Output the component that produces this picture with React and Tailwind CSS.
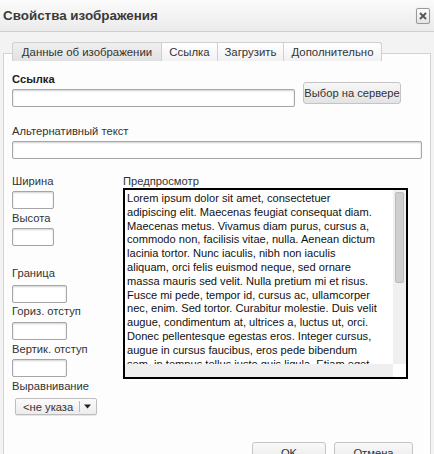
const previewLines = [
  "Lorem ipsum dolor sit amet, consectetuer",
  "adipiscing elit. Maecenas feugiat consequat diam.",
  "Maecenas metus. Vivamus diam purus, cursus a,",
  "commodo non, facilisis vitae, nulla. Aenean dictum",
  "lacinia tortor. Nunc iaculis, nibh non iaculis",
  "aliquam, orci felis euismod neque, sed ornare",
  "massa mauris sed velit. Nulla pretium mi et risus.",
  "Fusce mi pede, tempor id, cursus ac, ullamcorper",
  "nec, enim. Sed tortor. Curabitur molestie. Duis velit",
  "augue, condimentum at, ultrices a, luctus ut, orci.",
  "Donec pellentesque egestas eros. Integer cursus,",
  "augue in cursus faucibus, eros pede bibendum",
  "sem, in tempus tellus justo quis ligula. Etiam eget",
  "tortor. Vestibulum rutrum, est ut placerat",
];

function Input({ className }) {
  return (
    <div
      className={
        "h-[18px] bg-white border border-[#a6a6a6] rounded-[2px] shadow-[inset_0_1px_2px_rgba(0,0,0,0.18)] " +
        className
      }
    />
  );
}

function Tab({ label, active, className }) {
  return (
    <div
      className={
        "h-[19px] flex items-center justify-center border-t border-l border-[#d0d0d0] text-[11.4px] text-[#333] whitespace-nowrap " +
        (active
          ? "bg-gradient-to-b from-[#f0f0f0] to-[#e1e1e1] "
          : "bg-gradient-to-b from-[#ffffff] to-[#f1f1f1] ") +
        className
      }
    >
      {label}
    </div>
  );
}

export default function App() {
  return (
    <div className="w-[434px] h-[454px] overflow-hidden bg-[#f3f3f3] font-['Liberation_Sans',Arial,sans-serif] text-[11.2px] leading-[14px] text-[#333]">
      {/* Title bar */}
      <div className="h-[32px] border-b border-[#d0d0d0] bg-gradient-to-b from-[#fbfbfb] to-[#ebebeb] flex items-center justify-between pl-[3px] pr-[4px]">
        <span className="text-[13.4px] leading-[16px] font-bold text-[#3a3a3a]">
          Свойства изображения
        </span>
        <div className="w-[14px] h-[16px] border border-[#999] rounded-[2px] bg-gradient-to-b from-[#fdfdfd] to-[#e4e4e4] shadow-[0_0_1px_rgba(0,0,0,0.2)] flex items-center justify-center">
          <svg width="8" height="8" viewBox="0 0 8 8">
            <path d="M1 1 L7 7 M7 1 L1 7" stroke="#555" strokeWidth="1.8" />
          </svg>
        </div>
      </div>

      {/* Body */}
      <div className="px-[3px] pt-[10px]">
        {/* Tabs */}
        <div className="ml-[9px] flex relative z-10 -mb-[8px]">
          <Tab label="Данные об изображении" active className="w-[149px] rounded-tl-[3px]" />
          <Tab label="Ссылка" className="w-[56px]" />
          <Tab label="Загрузить" className="w-[66px]" />
          <Tab label="Дополнительно" className="w-[99px] border-r rounded-tr-[3px]" />
        </div>

        {/* Panel */}
        <div className="h-[401px] border border-b-0 border-[#d3d3d3] bg-[#fdfdfd] pl-[8px] pt-[18px]">
          <div className="flex items-start">
            <div className="w-[283px]">
              <div className="font-bold text-[#222]">Ссылка</div>
              <Input className="mt-[3px] w-[283px]" />
            </div>
            <div className="ml-[8px] mt-[10px] w-[98px] h-[22px] border border-[#c4c4c4] rounded-[3px] bg-gradient-to-b from-[#f7f7f7] to-[#e3e3e3] flex items-center justify-center text-[#333] whitespace-nowrap">
              Выбор на сервере
            </div>
          </div>

          <div className="mt-[17px]">Альтернативный текст</div>
          <Input className="mt-[3px] w-[410px]" />

          <div className="flex mt-[15px]">
            {/* Left column */}
            <div className="w-[111px] flex flex-col items-start">
              <div>Ширина</div>
              <Input className="mt-[3px] w-[42px]" />
              <div className="mt-[2px]">Высота</div>
              <Input className="mt-[3px] w-[42px]" />
              <div className="mt-[20px]">Граница</div>
              <Input className="mt-[5px] w-[55px]" />
              <div className="mt-[1px]">Гориз. отступ</div>
              <Input className="mt-[4px] w-[55px]" />
              <div className="mt-[2px]">Вертик. отступ</div>
              <Input className="mt-[3px] w-[55px]" />
              <div className="mt-[2px]">Выравнивание</div>
              <div className="mt-[5px] ml-[3px] w-[82px] h-[17px] border border-[#bdbdbd] rounded-[2px] bg-gradient-to-b from-[#fbfbfb] to-[#ececec] shadow-[0_1px_1px_rgba(0,0,0,0.1)] flex items-center">
                <span className="pl-[7px] w-[64px] text-[#333] whitespace-nowrap overflow-hidden">
                  &lt;не указа
                </span>
                <div className="w-px h-[11px] bg-[#b8b8b8]" />
                <svg width="16" height="15" viewBox="0 0 16 15" className="shrink-0">
                  <path d="M4 5.5 L11 5.5 L7.5 9.5 Z" fill="#222" />
                </svg>
              </div>
            </div>

            {/* Preview */}
            <div className="flex flex-col">
              <div>Предпросмотр</div>
              <div className="w-[285px] h-[191px] border-2 border-black bg-white flex flex-col">
                <div className="flex h-[174px]">
                  <div className="flex-1 overflow-hidden pl-[2px] pt-[2px] text-[11.1px] text-[#111] leading-[13.8px] whitespace-nowrap">
                    {previewLines.map((l, i) => (
                      <div key={i}>{l}</div>
                    ))}
                  </div>
                  <div className="w-[13px] bg-[#f0f0f0] pt-[2px] flex justify-center">
                    <div className="w-[9px] h-[91px] bg-[#cfcfcf] border border-[#bcbcbc] rounded-[2px]" />
                  </div>
                </div>
                <div className="flex h-[13px]">
                  <div className="flex-1 bg-[#efefef]" />
                  <div className="w-[13px] bg-white" />
                </div>
              </div>
            </div>
          </div>

          {/* Footer buttons */}
          <div className="flex justify-end pr-[17px] mt-[27px] gap-[8px]">
            <div className="w-[74px] h-[24px] border border-[#c4c4c4] rounded-[3px] bg-gradient-to-b from-[#f9f9f9] to-[#e6e6e6] flex justify-center pt-[3px] text-[#333]">
              OK
            </div>
            <div className="w-[79px] h-[24px] border border-[#c4c4c4] rounded-[3px] bg-gradient-to-b from-[#f9f9f9] to-[#e6e6e6] flex justify-center pt-[3px] text-[#333]">
              Отмена
            </div>
          </div>
        </div>
      </div>
    </div>
  );
}
